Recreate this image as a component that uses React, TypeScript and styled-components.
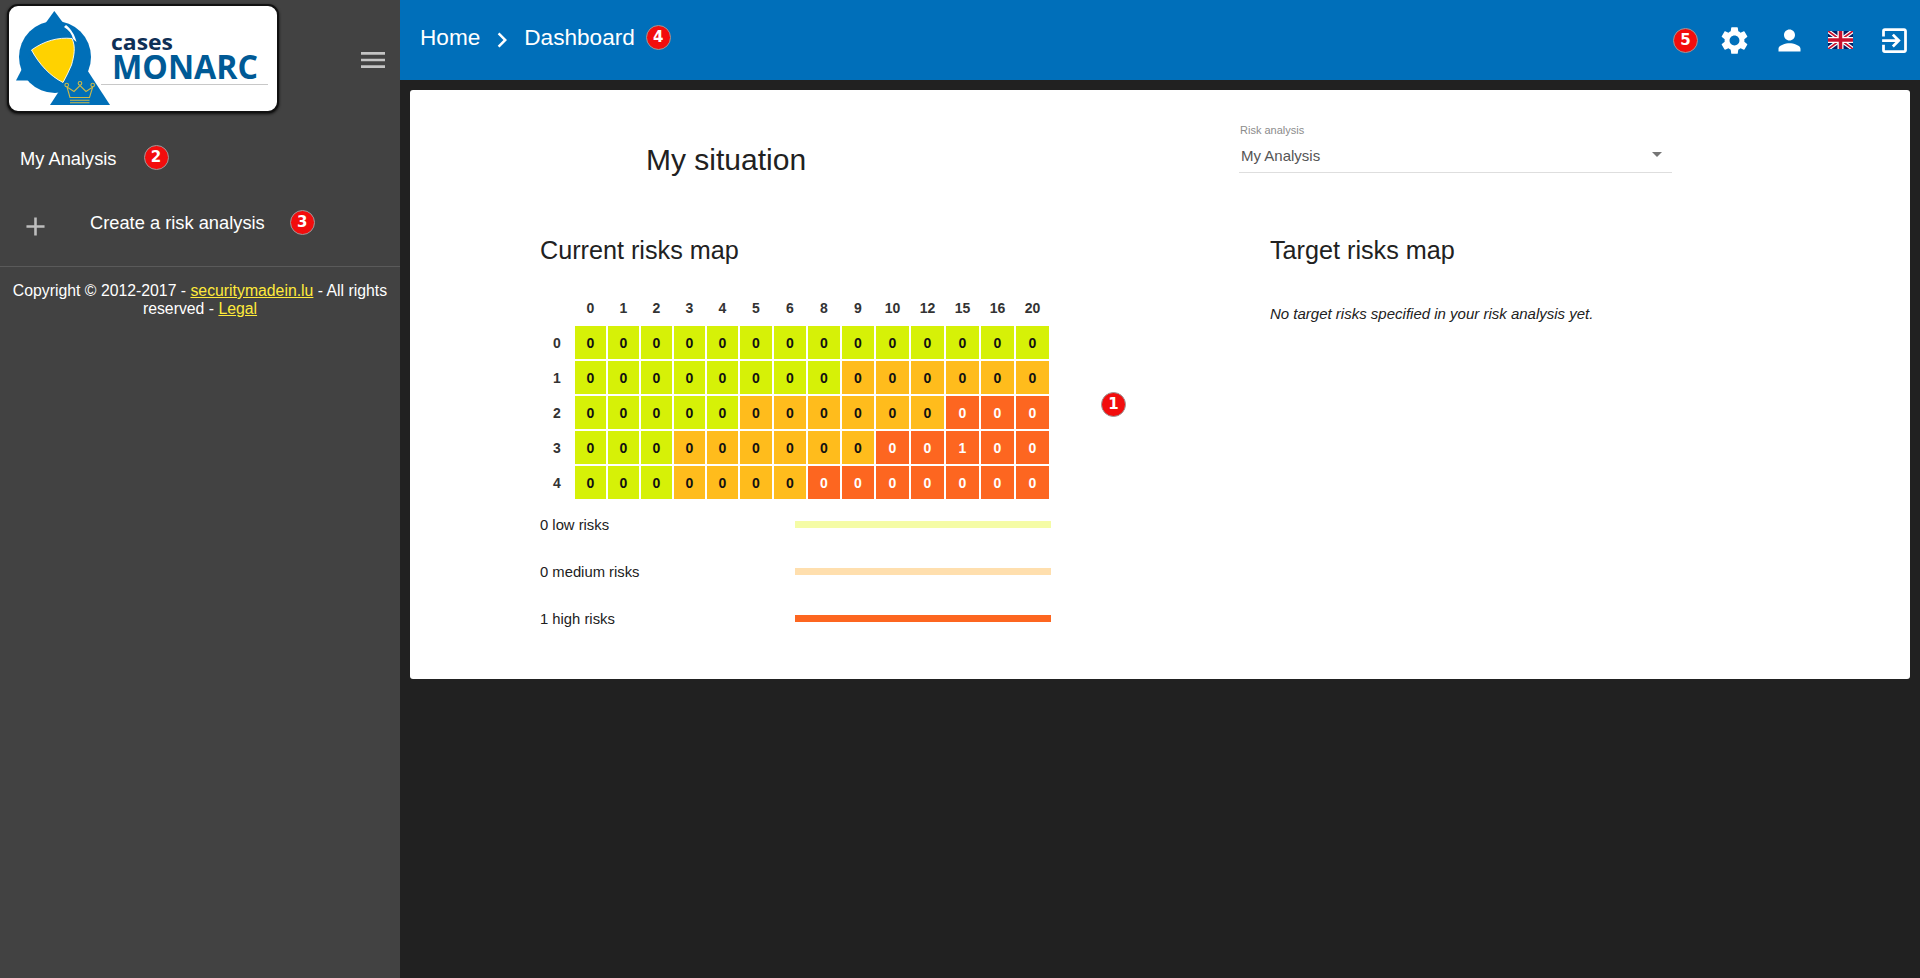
import React from 'react';
import styled, { createGlobalStyle } from 'styled-components';
import { MdAdd, MdChevronRight, MdExitToApp, MdMenu, MdPerson, MdSettings } from 'react-icons/md';

const palette = {
  page: '#212121',
  sidebar: '#424242',
  header: '#006fba',
  text: '#212121',
  low: '#d6f107',
  medium: '#ffbc1c',
  high: '#fd6620'
};

type Level = 'low' | 'medium' | 'high';

const GlobalStyle = createGlobalStyle`
  html, body {
    margin: 0;
    height: 100%;
    background: ${palette.page};
  }

  body {
    font-family: "Liberation Sans", Arial, sans-serif;
    color: ${palette.text};
  }
`;

const Layout = styled.div`
  display: flex;
  width: 1920px;
  height: 978px;
  overflow: hidden;
`;

const Sidebar = styled.aside`
  flex: 0 0 400px;
  background: ${palette.sidebar};
  color: #fff;
  font-size: 18.3px;
`;

const Brand = styled.div`
  display: flex;
  align-items: flex-start;
  height: 124px;
  padding: 4px 11px 0 7px;
`;

const LogoCard = styled.div`
  width: 272px;
  height: 109px;
  box-sizing: border-box;
  background: #fff;
  border: 2px solid #111;
  border-radius: 11px;
  box-shadow: 0 1px 3px rgba(0, 0, 0, 0.8);
  overflow: hidden;

  svg {
    display: block;
  }
`;

const MenuButton = styled.div`
  display: flex;
  margin: 40px 0 0 auto;
  color: #c4c4c4;
`;

const NavRow = styled.div`
  display: flex;
  align-items: center;
  height: 64px;
  padding-left: 20px;
`;

const PlusIcon = styled.span`
  display: flex;
  margin: 4px 39px 0 0;
  color: #bdbdbd;
`;

const NavLabel = styled.span`
  margin-bottom: 2px;
`;

const Copyright = styled.div`
  margin-top: 10px;
  padding: 15px 10px 0;
  border-top: 1px solid #5a5a5a;
  font-size: 15.8px;
  line-height: 18px;
  text-align: center;

  a {
    color: #ffeb3b;
    text-decoration: underline;
  }
`;

const Badge = styled.span<{ $gap?: number }>`
  display: inline-flex;
  align-items: center;
  justify-content: center;
  flex: none;
  width: 25px;
  height: 25px;
  box-sizing: border-box;
  margin-left: ${(p) => p.$gap ?? 0}px;
  border: 1.5px solid #9a9a9a;
  border-radius: 50%;
  background: #f20d0d;
  color: #fff;
  font-family: "DejaVu Sans", sans-serif;
  font-size: 15px;
  font-weight: 700;
  line-height: 1;
`;

const SideBadge = styled(Badge)<{ $lift: number }>`
  margin-bottom: ${(p) => p.$lift}px;
`;

const MapBadge = styled(Badge)`
  position: absolute;
  left: 691px;
  top: 302px;
`;

const Main = styled.main`
  flex: 1;
  min-width: 0;
`;

const TopBar = styled.header`
  display: flex;
  align-items: center;
  height: 80px;
  padding: 0 9px 0 20px;
  background: ${palette.header};
  color: #fff;
`;

const Crumb = styled.span`
  font-size: 22.6px;
  margin-bottom: 4px;
`;

const CrumbArrow = styled.span`
  display: flex;
  margin: 0 7px;
`;

const CrumbBadge = styled(Badge)`
  margin-left: 11px;
  margin-bottom: 6px;
`;

const Actions = styled.div`
  display: flex;
  align-items: center;
  margin-left: auto;
`;

const ActionIcon = styled.span<{ $gap: number }>`
  display: flex;
  margin-left: ${(p) => p.$gap}px;
`;

const Content = styled.div`
  padding: 10px;
`;

const Card = styled.section`
  position: relative;
  height: 589px;
  box-sizing: border-box;
  background: #fff;
  border-radius: 3px;
`;

const TopRow = styled.div`
  display: flex;
  height: 130px;
  padding: 34px 0 0 236px;
  box-sizing: border-box;
`;

const PageTitle = styled.h1`
  width: 593px;
  margin: 19px 0 0;
  font-size: 30px;
  font-weight: 400;
  line-height: 34px;
`;

const SelectField = styled.div`
  width: 433px;
  height: 49px;
  box-sizing: border-box;
  border-bottom: 1px solid #dedede;
`;

const SelectLabel = styled.div`
  padding-left: 1px;
  font-size: 11px;
  line-height: 12px;
  color: #8c8c8c;
`;

const SelectValue = styled.div`
  display: flex;
  align-items: center;
  justify-content: space-between;
  padding: 11px 10px 0 2px;
  font-size: 15px;
  line-height: 18px;
  color: #555;
`;

const SelectArrow = styled.span`
  width: 0;
  height: 0;
  margin-bottom: 3px;
  border-left: 5px solid transparent;
  border-right: 5px solid transparent;
  border-top: 5px solid #757575;
`;

const Maps = styled.div`
  display: flex;
  padding-left: 130px;
`;

const MapColumn = styled.div`
  flex: 0 0 730px;
`;

const MapTitle = styled.h2`
  margin: 16px 0 0;
  font-size: 25.2px;
  font-weight: 400;
  line-height: 28px;
`;

const RiskTable = styled.table`
  margin: 32px 0 0 -1px;
  border-collapse: separate;
  border-spacing: 2px;
  table-layout: fixed;
  font-size: 14px;
  font-weight: 700;
`;

const HeadCell = styled.th<{ $w?: number }>`
  width: ${(p) => p.$w ?? 32}px;
  height: 20px;
  padding: 0 0 6px;
  color: #333;
  font-size: 14px;
  text-align: center;
`;

const RowCell = styled(HeadCell)`
  height: 33px;
  padding: 0;
`;

const RiskCell = styled.td<{ $level: Level }>`
  height: 33px;
  padding: 0;
  box-sizing: border-box;
  background: ${(p) => palette[p.$level]};
  color: ${(p) => (p.$level === 'high' ? '#fff' : '#111')};
  text-align: center;
`;

const LegendRow = styled.div`
  display: flex;
  align-items: center;
  height: 47px;
  font-size: 14.8px;
`;

const LegendLabel = styled.span`
  width: 255px;
`;

const LegendBar = styled.span<{ $color: string }>`
  width: 256px;
  height: 7px;
  margin-bottom: 1px;
  background: ${(p) => p.$color};
`;

const EmptyNote = styled.p`
  margin: 41px 0 0;
  font-size: 15px;
  font-style: italic;
`;

const columns = [0, 1, 2, 3, 4, 5, 6, 8, 9, 10, 12, 15, 16, 20];
const widths = [31, 31, 31, 31, 31, 32, 32, 32, 32, 33, 33, 33, 33, 33];

// first column index of each band, per row
const bands = [
  { medium: 14, high: 14 },
  { medium: 8, high: 14 },
  { medium: 5, high: 11 },
  { medium: 3, high: 9 },
  { medium: 3, high: 7 }
];

const levelOf = (row: number, col: number): Level => {
  if (col >= bands[row].high) return 'high';
  if (col >= bands[row].medium) return 'medium';
  return 'low';
};

const legend = [
  { label: '0 low risks', color: '#f5fca6' },
  { label: '0 medium risks', color: '#ffdfae' },
  { label: '1 high risks', color: palette.high }
];

const Logo = () => (
  <svg width="268" height="105" viewBox="9 6 268 105">
    <circle cx="55" cy="57" r="36" fill="#006fb8" />
    <path d="M31.5 50 C44 41 58 37 72 38.5 C76 47 74 56 71.5 65 C69 71 66 77 63 82.5 C50 76 39 64 31.5 50 Z" fill="#ffd200" stroke="#fff" strokeWidth="0.9" />
    <path d="M54.3 11 L67 28 L42 28 Z" fill="#006fb8" />
    <path d="M66 25 C71 29 75 35 76.5 42 L73 39 C72 34 69 30 64 27 Z" fill="#fff" />
    <path d="M30.7 52 L45 80.5 L16 80.5 Z" fill="#006fb8" />
    <path d="M80 59 L110 105 L50 105 Z" fill="#006fb8" />
    <g fill="none" stroke="#c9b94a" strokeWidth="1.1">
      <path d="M70 97.5 L67 87 L74 91.5 L80 85.5 L86 91.5 L92.7 87 L89.5 97.5 Z" />
      <circle cx="66.7" cy="85" r="1.8" />
      <circle cx="80" cy="83.3" r="1.8" />
      <circle cx="92.7" cy="85" r="1.8" />
      <path d="M70 100.3 H89.5 M70 102.7 H89.5" />
    </g>
    <text x="111" y="50" fontFamily="'Open Sans', sans-serif" fontWeight="700" fontSize="21" fill="#0f2f56" textLength="62" lengthAdjust="spacingAndGlyphs">cases</text>
    <text x="112" y="79" fontFamily="'Open Sans', sans-serif" fontWeight="700" fontSize="34" fill="#005a96" textLength="146" lengthAdjust="spacingAndGlyphs">MONARC</text>
    <path d="M101 84.5 H268" stroke="#c8c8c8" strokeWidth="1" />
  </svg>
);

const UkFlag = () => (
  <svg width="25" height="18" viewBox="0 0 50 36">
    <rect width="50" height="36" fill="#012169" />
    <path d="M0 0 L50 36 M50 0 L0 36" stroke="#fff" strokeWidth="8" />
    <path d="M0 0 L50 36 M50 0 L0 36" stroke="#c8102e" strokeWidth="3.5" />
    <path d="M25 0 V36 M0 18 H50" stroke="#fff" strokeWidth="12" />
    <path d="M25 0 V36 M0 18 H50" stroke="#c8102e" strokeWidth="7" />
  </svg>
);

export default function App(): JSX.Element {
  return (
    <Layout>
      <GlobalStyle />
      <Sidebar>
        <Brand>
          <LogoCard>
            <Logo />
          </LogoCard>
          <MenuButton>
            <MdMenu size={32} />
          </MenuButton>
        </Brand>
        <NavRow>
          <NavLabel>My Analysis</NavLabel>
          <SideBadge $gap={27} $lift={6}>2</SideBadge>
        </NavRow>
        <NavRow>
          <PlusIcon>
            <MdAdd size={31} />
          </PlusIcon>
          <NavLabel>Create a risk analysis</NavLabel>
          <SideBadge $gap={25} $lift={3}>3</SideBadge>
        </NavRow>
        <Copyright>
          Copyright © 2012-2017 - <a href="#smile">securitymadein.lu</a> - All rights reserved - <a href="#legal">Legal</a>
        </Copyright>
      </Sidebar>
      <Main>
        <TopBar>
          <Crumb>Home</Crumb>
          <CrumbArrow>
            <MdChevronRight size={30} />
          </CrumbArrow>
          <Crumb>Dashboard</Crumb>
          <CrumbBadge>4</CrumbBadge>
          <Actions>
            <Badge>5</Badge>
            <ActionIcon $gap={20}>
              <MdSettings size={33} />
            </ActionIcon>
            <ActionIcon $gap={22}>
              <MdPerson size={33} />
            </ActionIcon>
            <ActionIcon $gap={22}>
              <UkFlag />
            </ActionIcon>
            <ActionIcon $gap={25}>
              <MdExitToApp size={33} />
            </ActionIcon>
          </Actions>
        </TopBar>
        <Content>
          <Card>
            <TopRow>
              <PageTitle>My situation</PageTitle>
              <SelectField>
                <SelectLabel>Risk analysis</SelectLabel>
                <SelectValue>
                  My Analysis
                  <SelectArrow />
                </SelectValue>
              </SelectField>
            </TopRow>
            <Maps>
              <MapColumn>
                <MapTitle>Current risks map</MapTitle>
                <RiskTable>
                  <thead>
                    <tr>
                      <HeadCell />
                      {columns.map((col, i) => (
                        <HeadCell key={col} $w={widths[i]}>{col}</HeadCell>
                      ))}
                    </tr>
                  </thead>
                  <tbody>
                    {bands.map((_, row) => (
                      <tr key={row}>
                        <RowCell>{row}</RowCell>
                        {columns.map((col, i) => (
                          <RiskCell key={col} $level={levelOf(row, i)}>
                            {row === 3 && col === 15 ? 1 : 0}
                          </RiskCell>
                        ))}
                      </tr>
                    ))}
                  </tbody>
                </RiskTable>
                {legend.map((item) => (
                  <LegendRow key={item.label}>
                    <LegendLabel>{item.label}</LegendLabel>
                    <LegendBar $color={item.color} />
                  </LegendRow>
                ))}
              </MapColumn>
              <MapColumn>
                <MapTitle>Target risks map</MapTitle>
                <EmptyNote>No target risks specified in your risk analysis yet.</EmptyNote>
              </MapColumn>
            </Maps>
            <MapBadge>1</MapBadge>
          </Card>
        </Content>
      </Main>
    </Layout>
  );
}
